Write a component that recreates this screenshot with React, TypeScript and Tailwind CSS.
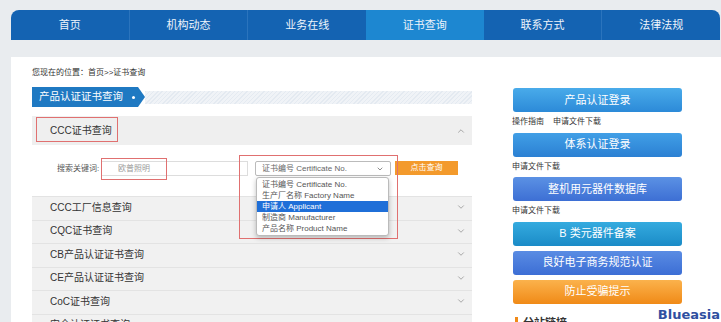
import React from 'react'
import { ChevronDown, ChevronUp } from 'lucide-react'

const tabs = ['首页', '机构动态', '业务在线', '证书查询', '联系方式', '法律法规']

const rows = ['CCC工厂信息查询', 'CQC证书查询', 'CB产品认证证书查询', 'CE产品认证证书查询', 'CoC证书查询', '安全认证证书查询']

const options = ['证书编号 Certificate No.', '生产厂名称 Factory Name', '申请人 Applicant', '制造商 Manufacturer', '产品名称 Product Name']

const App = () => {
    return (
        <div className="relative w-[721px] h-[322px] overflow-hidden bg-[#e9ecef] font-['Liberation_Sans','Noto_Sans_CJK_SC',sans-serif]">
            {/* top nav */}
            <div className="ml-[11px] mt-[10px] w-[709px] h-[30px] rounded-t-[8px] bg-[#1463b2] flex overflow-hidden">
                {tabs.map((t, i) => (
                    <div key={t}
                        className={'flex-1 flex items-center justify-center text-[11px] text-[#eef4fb] ' +
                            (i === 3 ? 'bg-[#1d87d1]' : '') + (i > 0 && i !== 3 && i !== 4 ? ' border-l border-[#2b74bd]' : '')}>
                        {t}
                    </div>
                ))}
            </div>

            {/* content panel */}
            <div className="ml-[11px] mt-[17px] h-[300px] bg-white flex pl-[21px]">
                <div className="w-[440px] pt-[10px]">
                    <div className="text-[8px] leading-[12px] text-[#333]">您现在的位置：首页&gt;&gt;证书查询</div>

                    <div className="mt-[8px] flex items-center h-[20px]">
                        <div className="w-[113px] h-[20px] bg-[#1f79c2] flex items-center pl-[7px] text-[10.5px] text-white [clip-path:polygon(0_0,calc(100%-7px)_0,100%_50%,calc(100%-7px)_100%,0_100%)]">
                            <span>产品认证证书查询</span>
                            <span className="ml-[9px] w-[3px] h-[3px] rounded-full bg-white" />
                        </div>
                        <div className="flex-1 h-[13px] bg-[repeating-linear-gradient(135deg,#e4eaf1_0px,#e4eaf1_1px,#f0f3f7_1px,#f0f3f7_3px)]" />
                    </div>

                    <div className="mt-[9px]">
                        <div className="h-[29px] bg-[#efefef] flex items-center pl-[18px] pr-[6px] text-[10px] text-[#333]">
                            <span className="flex-1">CCC证书查询</span>
                            <ChevronUp size={10} color="#999" strokeWidth={2} />
                        </div>
                        <div className="h-[51px] bg-white flex items-start pt-[16px] pl-[25px]">
                            <span className="w-[44px] text-[8px] leading-[15px] text-[#555]">搜索关键词:</span>
                            <input readOnly placeholder="欧普照明"
                                className="w-[147px] h-[15px] border border-[#ddd] pl-[16px] text-[8px] outline-none placeholder:text-[#999]" />
                            <div className="relative ml-[7px] w-[136px] h-[15px] border border-[#bbb] rounded-[2px] flex items-center pl-[6px] pr-[6px] text-[8px] text-[#666]">
                                <span className="flex-1">证书编号 Certificate No.</span>
                                <ChevronDown size={8} color="#555" strokeWidth={2} />
                                <div className="absolute left-0 top-[15px] w-[133px] bg-white border border-[#bbb] rounded-[3px] shadow-[0_2px_5px_rgba(0,0,0,0.25)] py-[1px] z-10">
                                    {options.map((o, i) => (
                                        <div key={o}
                                            className={'h-[11px] leading-[11px] pl-[5px] text-[8px] ' + (i === 2 ? 'bg-[#1f6fd8] text-white' : 'text-[#555]')}>
                                            {o}
                                        </div>
                                    ))}
                                </div>
                            </div>
                            <div className="ml-[4px] w-[63px] h-[14px] bg-[#f39a2c] flex items-center justify-center text-[8px] text-white">点击查询</div>
                        </div>
                        {rows.map(r => (
                            <div key={r} className="h-[23.5px] bg-[#f1f1f1] border-t border-[#e3e3e3] flex items-center pl-[18px] pr-[6px] pb-[2px] text-[10px] text-[#333]">
                                <span className="flex-1">{r}</span>
                                <ChevronDown size={10} color="#999" strokeWidth={2} />
                            </div>
                        ))}
                    </div>
                </div>

                {/* right column */}
                <div className="ml-[41px] w-[169px] pt-[31px] flex flex-col">
                    <SideButton label="产品认证登录" cls="bg-[linear-gradient(#49abea,#2c8ad8)]" />
                    <SmallText>操作指南&nbsp;&nbsp;&nbsp;&nbsp;申请文件下载</SmallText>
                    <SideButton label="体系认证登录" cls="bg-[linear-gradient(#419fe6,#2b80d3)]" />
                    <SmallText>申请文件下载</SmallText>
                    <SideButton label="整机用元器件数据库" cls="bg-[linear-gradient(#5b91e4,#3d6fd4)]" />
                    <SmallText>申请文件下载</SmallText>
                    <SideButton label="B 类元器件备案" cls="bg-[linear-gradient(#35abdf,#1a8bc7)]" />
                    <div className="h-[5px]" />
                    <SideButton label="良好电子商务规范认证" cls="bg-[linear-gradient(#5a8ce3,#3c6ed5)]" />
                    <div className="h-[5px]" />
                    <SideButton label="防止受骗提示" cls="bg-[linear-gradient(#fbb24c,#f08a17)]" />
                    <div className="mt-[11px] flex items-center">
                        <span className="ml-[2px] w-[3px] h-[12px] bg-[#f08a18]" />
                        <span className="ml-[5px] text-[11px] font-bold text-[#333]">分站链接</span>
                    </div>
                </div>
            </div>

            {/* annotation boxes */}
            <div className="absolute left-[36px] top-[117px] w-[82px] h-[25px] border border-[#e07070]" />
            <div className="absolute left-[101px] top-[158px] w-[66px] h-[22px] border border-[#e07070]" />
            <div className="absolute left-[239px] top-[155px] w-[159px] h-[84px] border border-[#e07070]" />

            <div className="absolute right-[1px] bottom-[1px] text-[13px] leading-[13px] font-bold text-[#2f4fa0] font-['DejaVu_Sans',sans-serif]">Blueasia</div>
        </div>
    )
}

function SideButton(props: { label: string; cls: string }) {
    return (
        <div className={'h-[24px] rounded-[3px] flex items-center justify-center text-[11px] text-white ' + props.cls}>
            {props.label}
        </div>
    )
}

function SmallText(props: { children: React.ReactNode }) {
    return (
        <div className="h-[20.5px] flex items-center text-[8px] text-[#333] -ml-[1px]">{props.children}</div>
    )
}

export default App
